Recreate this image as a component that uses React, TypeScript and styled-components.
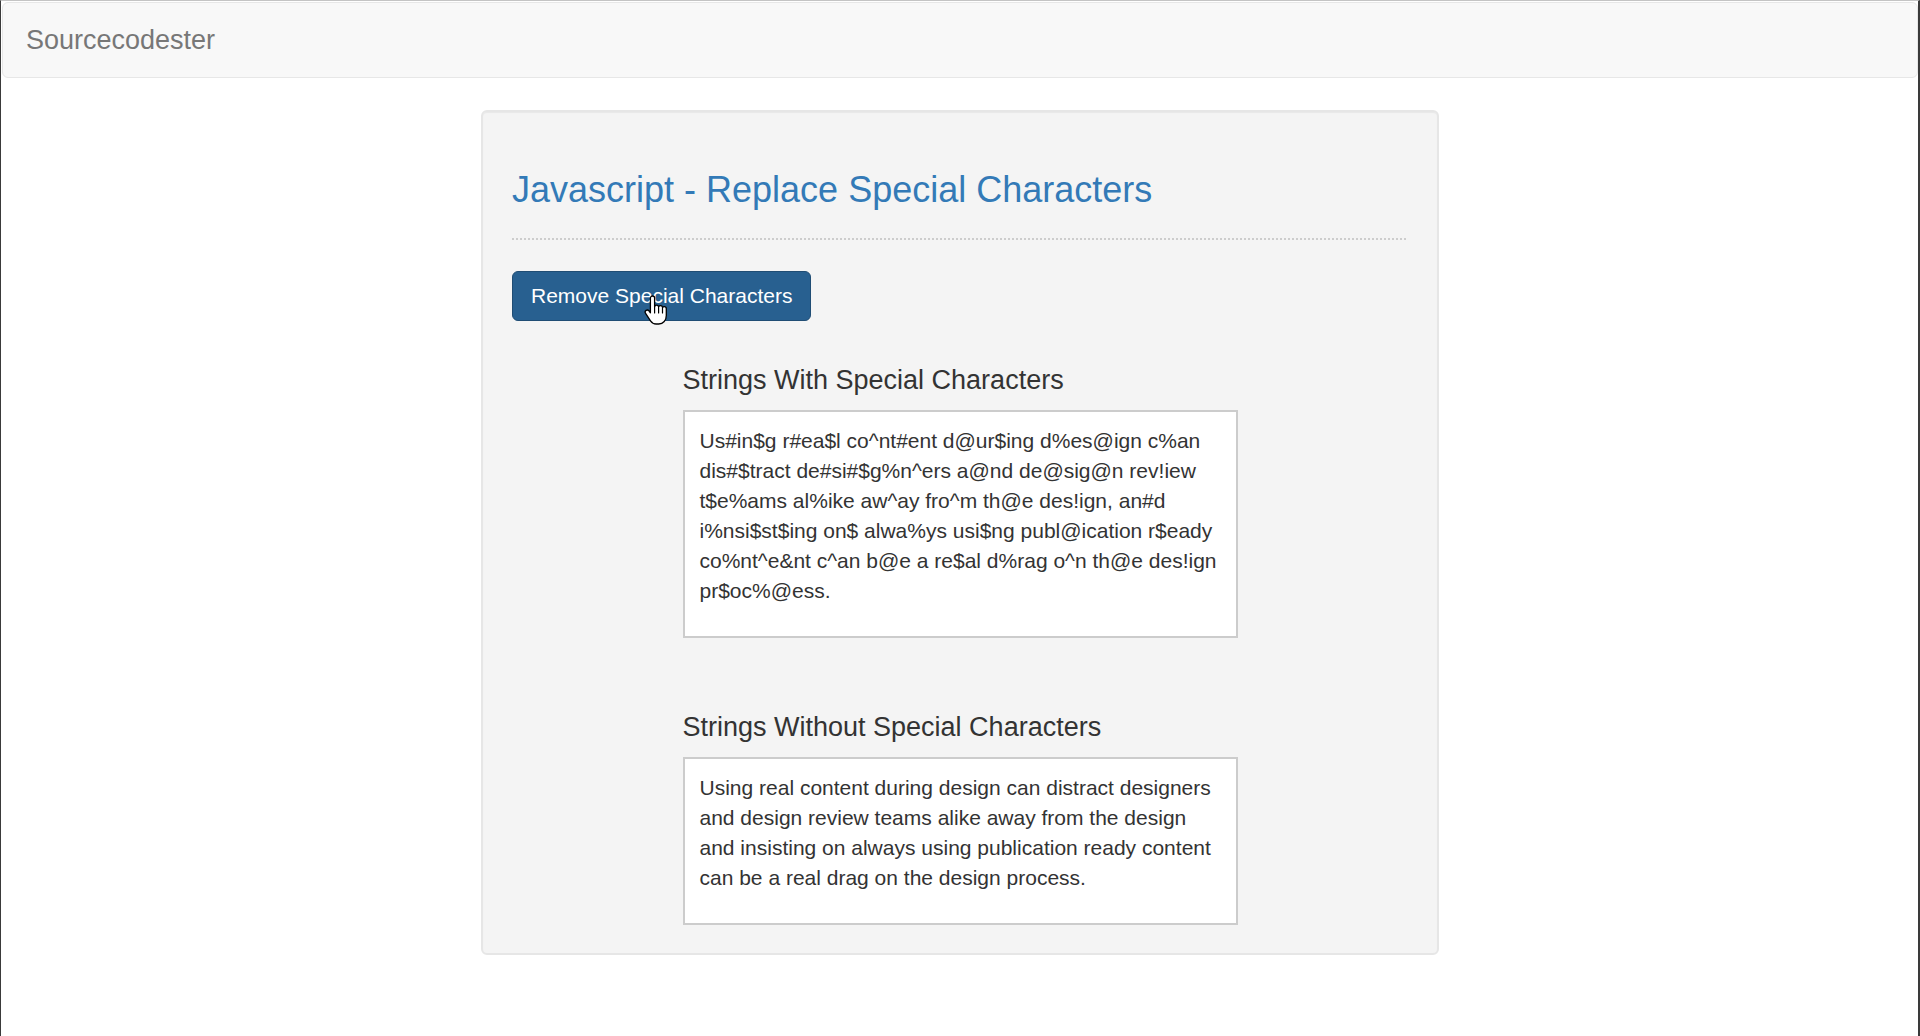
import styled, { createGlobalStyle } from 'styled-components';

const GlobalStyle = createGlobalStyle`
    html, body {
        margin: 0;
        padding: 0;
        background: #fff;
    }
    body {
        font-family: "Liberation Sans", Arial, Helvetica, sans-serif;
        color: #333;
    }
    * {
        box-sizing: border-box;
    }
`;

const Frame = styled.div`
    height: 1036px;
    overflow: hidden;
    border-top: 1px solid #c4c4c4;
    border-left: 1px solid #3a3a3a;
    border-right: 2px solid #3a3a3a;
    padding: 1px 0 0 1px;
`;

const Navbar = styled.nav`
    height: 76px;
    display: flex;
    align-items: center;
    padding: 0 23px;
    background-color: #f8f8f8;
    border: 1px solid #e7e7e7;
    border-radius: 6px;
`;

const Brand = styled.a`
    font-size: 27px;
    line-height: 30px;
    color: #777;
    text-decoration: none;
`;

const Well = styled.div`
    width: 958px;
    margin: 32px auto 0;
    padding: 28px 29px;
    background-color: #f4f4f4;
    border: 2px solid #e6e6e6;
    border-radius: 6px;
    box-shadow: inset 0 1px 1px rgba(0, 0, 0, 0.05);
`;

const PageHeader = styled.div`
    padding-bottom: 15px;
    margin-bottom: 31px;
    background-image: repeating-linear-gradient(to right, #cdcdcd 0 2px, transparent 2px 4px);
    background-size: 100% 2px;
    background-repeat: no-repeat;
    background-position: left bottom;
`;

const Title = styled.h3`
    margin: 30px 0 15px;
    font-size: 36px;
    line-height: 40px;
    font-weight: 500;
    color: #337ab7;
`;

const ActionButton = styled.button`
    position: relative;
    display: inline-block;
    padding: 9px 18px;
    font-family: inherit;
    font-size: 21px;
    line-height: 30px;
    color: #fff;
    background-color: #286090;
    border: 1px solid #204d74;
    border-radius: 6px;
    cursor: pointer;
`;

const Cursor = styled.svg`
    position: absolute;
    left: 131px;
    top: 23px;
    pointer-events: none;
`;

type SectionProps = {
    readonly $top: number
}
const Section = styled.section<SectionProps>`
    width: 555px;
    margin: ${({ $top }) => $top}px auto 0;
`;

const SectionTitle = styled.h4`
    margin: 0 0 15px;
    font-size: 27px;
    line-height: 30px;
    font-weight: 500;
    color: #333;
`;

const TextBox = styled.div`
    background: #fff;
    border: 2px solid #cccccc;
    padding: 14px 15px 15px;
`;

const Paragraph = styled.p`
    margin: 0 0 15px;
    font-size: 21px;
    line-height: 30px;
    color: #333;
`;

const original =
    'Us#in$g r#ea$l co^nt#ent d@ur$ing d%es@ign c%an dis#$tract de#si#$g%n^ers a@nd de@sig@n rev!iew t$e%ams al%ike aw^ay fro^m th@e des!ign, an#d i%nsi$st$ing on$ alwa%ys usi$ng publ@ication r$eady co%nt^e&nt c^an b@e a re$al d%rag o^n th@e des!ign pr$oc%@ess.';

const cleaned =
    'Using real content during design can distract designers and design review teams alike away from the design and insisting on always using publication ready content can be a real drag on the design process.';

const HandCursor = () => (
    <Cursor width='26' height='30' viewBox='0 0 26 30'>
        <path
            d='M8.5 1c1.2 0 2.1.9 2.1 2.1v8.6c.3-.9 1.1-1.5 2-1.5 1 0 1.8.7 2 1.6.4-.7 1.1-1.1 1.9-1.1 1.1 0 1.9.8 2 1.8.4-.5 1-.8 1.7-.8 1.2 0 2.1.9 2.1 2.1v6.6c0 4.9-3 8.6-7.6 8.6h-2.6c-2.6 0-4.2-1.1-5.6-3.2L1.6 18.4c-.7-1-.5-2.3.5-3 .9-.6 2.2-.4 2.9.5l1.4 1.9V3.1C6.4 1.9 7.3 1 8.5 1z'
            fill='#fff'
            stroke='#000'
            strokeWidth='1.3'
            strokeLinejoin='round'
        />
        <path d='M10.6 11.7v6.3M14.6 12.3v5.7M18.5 13.2v4.8' stroke='#000' strokeWidth='1.2' strokeLinecap='round' />
    </Cursor>
);

export default function App() {
    return (
        <>
            <GlobalStyle />
            <Frame>
                <Navbar>
                    <Brand href='#'>Sourcecodester</Brand>
                </Navbar>
                <Well>
                    <PageHeader>
                        <Title>Javascript - Replace Special Characters</Title>
                    </PageHeader>
                    <ActionButton type='button'>
                        Remove Special Characters
                        <HandCursor />
                    </ActionButton>
                    <Section $top={44}>
                        <SectionTitle>Strings With Special Characters</SectionTitle>
                        <TextBox>
                            <Paragraph>{original}</Paragraph>
                        </TextBox>
                    </Section>
                    <Section $top={74}>
                        <SectionTitle>Strings Without Special Characters</SectionTitle>
                        <TextBox>
                            <Paragraph>{cleaned}</Paragraph>
                        </TextBox>
                    </Section>
                </Well>
            </Frame>
        </>
    );
}
